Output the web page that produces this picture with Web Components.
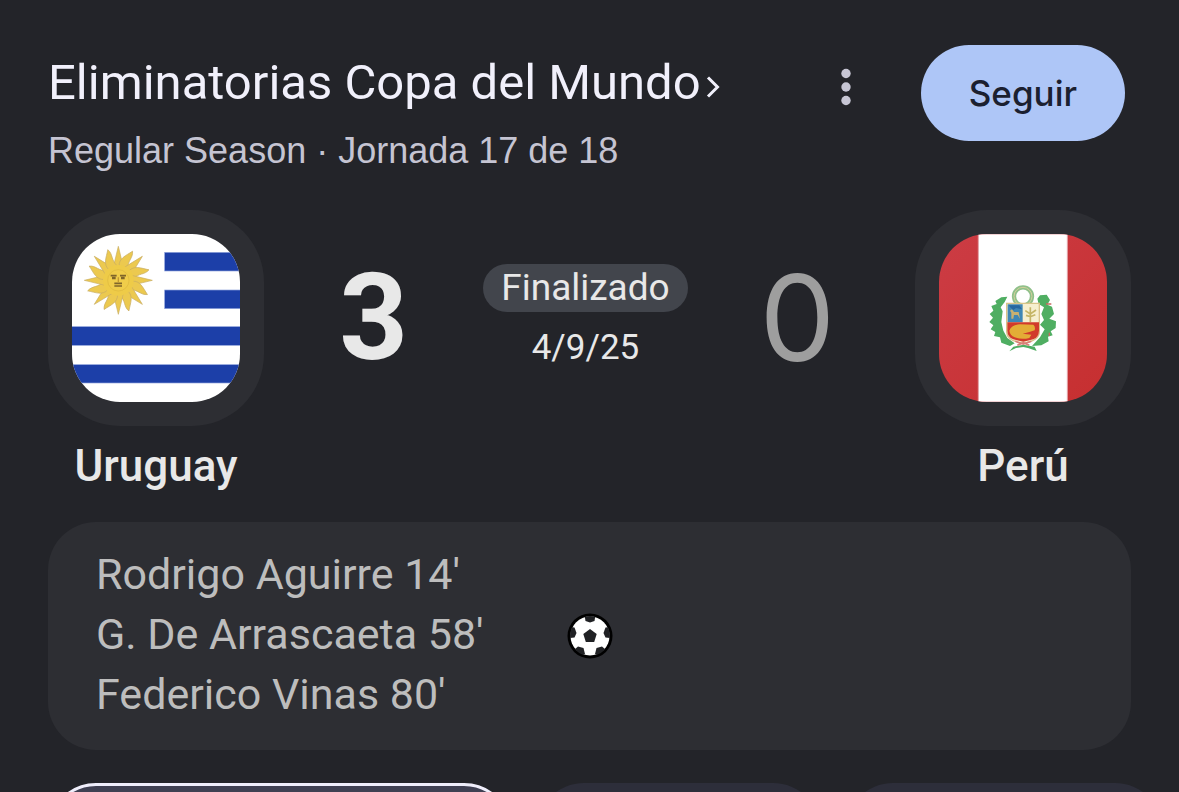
<!DOCTYPE html>
<html lang="es">
<head>
<meta charset="utf-8">
<meta name="viewport" content="width=device-width, initial-scale=1">
<title>Uruguay - Perú</title>
<style>
html{
    scrollbar-width: none;
}
body{
    margin: 0;
    background-color: #232429;
    color: #e8e8e8;
    font-family: Roboto, "Open Sans", sans-serif;
}
</style>
</head>
<body>

<match-panel>
    <match-header slot="header">
        <span slot="title">Eliminatorias Copa del Mundo</span>
        <span slot="subtitle">Regular Season · Jornada 17 de 18</span>
        <span slot="action">Seguir</span>
    </match-header>

    <match-score slot="score">
        <team-badge slot="home"><flag-uruguay slot="flag"></flag-uruguay>Uruguay</team-badge>
        <span slot="home-goals">3</span>
        <span slot="status">Finalizado</span>
        <span slot="date">4/9/25</span>
        <span slot="away-goals">0</span>
        <team-badge slot="away"><flag-peru slot="flag"></flag-peru>Perú</team-badge>
    </match-score>

    <goal-list slot="goals">
        <goal-item>Rodrigo Aguirre 14'</goal-item>
        <goal-item>G. De Arrascaeta 58'</goal-item>
        <goal-item>Federico Vinas 80'</goal-item>
    </goal-list>

    <match-tabs slot="tabs"></match-tabs>
</match-panel>

<script>
function define(name, html) {
    const template = document.createElement("template");
    template.innerHTML = html;
    window.customElements.define(name, class extends HTMLElement {
        constructor() {
            super();
            this.attachShadow({mode:"open"});
            this.shadowRoot.appendChild(template.content.cloneNode(true));
        }
    });
}

define("match-panel", `
<style>
:host{
    display: flex;
    flex-direction: column;
    height: 100vh;
    overflow: hidden;
}
</style>
<slot name="header"></slot>
<slot name="score"></slot>
<slot name="goals"></slot>
<slot name="tabs"></slot>
`);

define("match-header", `
<style>
:host{
    display: flex;
    align-items: flex-start;
    padding: 45px 54px 0 48px;
}
.titles{
    flex: 1;
    padding-top: 8px;
}
.title{
    display: flex;
    align-items: center;
    gap: 5px;
    color: #f1f0fb;
    font-size: 49px;
    line-height: 60px;
    text-decoration: none;
    white-space: nowrap;
}
.title svg{
    margin-top: 8px;
}
.subtitle{
    margin: 0;
    padding-top: 14px;
    color: #c5c4d2;
    font-family: "Liberation Sans", Arial, sans-serif;
    font-size: 36px;
    line-height: 48px;
    white-space: nowrap;
}
button{
    border: none;
    cursor: pointer;
    padding: 0;
}
.more{
    width: 48px;
    height: 86px;
    margin-right: 51px;
    background: none;
}
.follow{
    height: 96px;
    padding: 0 48px;
    border-radius: 48px;
    background-color: #aec6f7;
    color: #1b2030;
    font-family: Inter, sans-serif;
    font-size: 35px;
    font-weight: 500;
}
</style>
<div class="titles">
    <a class="title" href="#"><slot name="title"></slot><svg width="14" height="22" viewBox="0 0 14 22" fill="none" stroke="#f1f0fb" stroke-width="3"><path d="M2 1.500L11.500 11L2 20.500"/></svg></a>
    <p class="subtitle"><slot name="subtitle"></slot></p>
</div>
<button class="more"><svg width="12" height="38" viewBox="0 0 12 38" fill="#c7c6d4"><circle cx="6" cy="5.500" r="4.700"/><circle cx="6" cy="19" r="4.700"/><circle cx="6" cy="32.500" r="4.700"/></svg></button>
<button class="follow"><slot name="action"></slot></button>
`);

define("match-score", `
<style>
:host{
    display: grid;
    grid-template-columns: 216px 1fr 216px;
    padding: 35px 48px 0;
}
.middle{
    display: grid;
    grid-template-columns: 1fr auto 1fr;
    align-items: center;
    height: 216px;
    padding-right: 8px;
}
.goals{
    font-size: 120px;
    line-height: 144px;
    text-align: center;
}
.won{
    font-weight: 700;
}
.lost{
    color: #9e9e9e;
    font-family: Inter, sans-serif;
    font-weight: 400;
}
.info{
    display: flex;
    flex-direction: column;
    align-items: center;
    gap: 12px;
    font-size: 37px;
    line-height: 48px;
}
.status{
    padding: 0 18px;
    border-radius: 24px;
    background-color: #42454c;
}
.date{
    font-size: 35px;
}
</style>
<slot name="home"></slot>
<div class="middle">
    <div class="goals won"><slot name="home-goals"></slot></div>
    <div class="info">
        <div class="status"><slot name="status"></slot></div>
        <div class="date"><slot name="date"></slot></div>
    </div>
    <div class="goals lost"><slot name="away-goals"></slot></div>
</div>
<slot name="away"></slot>
`);

define("team-badge", `
<style>
:host{
    display: flex;
    flex-direction: column;
    align-items: center;
    gap: 12px;
    font-size: 44px;
    font-weight: 500;
    line-height: 56px;
}
.frame{
    padding: 24px;
    border-radius: 72px;
    background-color: #2d2e33;
}
</style>
<div class="frame"><slot name="flag"></slot></div>
<div><slot></slot></div>
`);

const flagStyle = `
<style>
:host{
    display: block;
    width: 168px;
    height: 168px;
    border-radius: 48px;
    overflow: hidden;
}
svg{
    display: block;
}
</style>
`;

/* sixteen rays, straight and wavy in turn */
let rays = "";
for (let i = 0; i < 16; i++) {
    const d = i % 2 ? "M-14 -40C-24 -62 -8 -76 6 -97C16 -78 2 -66 14 -40Z" : "M-15 -40L0 -102L15 -40Z";
    rays += `<path d="${d}" transform="translate(235 241) rotate(${i * 22.5})"/>`;
}

define("flag-uruguay", flagStyle + `
<svg width="168" height="168" viewBox="96 102 504 504">
    <rect x="96" y="102" width="504" height="504" fill="#fff"/>
    <g fill="#1c3fa8" stroke="#8fa3dc" stroke-width="2">
        <rect x="374" y="157" width="240" height="56"/>
        <rect x="374" y="270" width="240" height="56"/>
        <rect x="80" y="380" width="540" height="56"/>
        <rect x="80" y="494" width="540" height="55"/>
    </g>
    <g fill="#ecc94f" stroke="#c9ad62" stroke-width="2">${rays}</g>
    <circle cx="235" cy="241" r="46" fill="#eecb48"/>
    <circle cx="235" cy="241" r="32" fill="#f0cd4a" stroke="#dcb840" stroke-width="2"/>
    <g fill="none" stroke="#80662a">
        <path d="M212 227H230M240 227H258" stroke-width="5"/>
        <path d="M216 234H227M243 234H254" stroke-width="7"/>
        <path d="M235 232V246" stroke="#c39a31" stroke-width="4"/>
        <path d="M223 250H246M223 258H246" stroke-width="5"/>
    </g>
</svg>
`);

define("flag-peru", flagStyle + `
<svg width="168" height="168" viewBox="117 102 504 504">
    <defs>
        <linearGradient id="red" x1="0" y1="0" x2="1" y2="1">
            <stop offset="0" stop-color="#cc3c44"/>
            <stop offset="1" stop-color="#c62f30"/>
        </linearGradient>
    </defs>
    <rect x="117" y="102" width="504" height="504" fill="url(#red)"/>
    <rect x="235" y="102" width="267" height="504" fill="#fff" stroke="#e3a3a8" stroke-width="3"/>
    <g fill="#4fae62">
        <path d="M322 290L304 292L286 303L290 312L274 318L280 332L269 342L279 353L268 366L280 376L272 388L286 396L282 408L300 412L304 428L330 438L344 430L322 414L310 392L304 366L308 334L302 322L314 306Z"/>
        <path d="M420 286L440 284L450 300L442 314L456 320L462 342L448 356L468 364L467 384L452 394L458 406L444 410L446 424L424 436L396 438L420 412L434 388L420 374L432 360L424 342L432 322L416 312L412 296Z"/>
        <path d="M328 454L340 440L370 434L404 440L410 453L384 444L370 441L348 444Z"/>
    </g>
    <circle cx="369" cy="289" r="27" fill="none" stroke="#8fc08a" stroke-width="13"/>
    <circle cx="369" cy="289" r="27" fill="none" stroke="#d3cf9a" stroke-width="3"/>
    <path d="M320 310H418V396Q418 422 369 430Q320 422 320 396Z" fill="#f6efcf" stroke="#d8c489" stroke-width="4"/>
    <path d="M323 313H368V367H323Z" fill="#3f86b5"/>
    <path d="M334 356V338L330 332L336 328L342 336H356L360 356L353 345H342L340 356Z" fill="#c9b071"/>
    <path d="M326 316H358L366 328L348 324L340 330L332 323Z" fill="#2667a0"/>
    <path d="M391 366V340M376 332L391 342L408 330M378 346L391 350L406 344M391 340V322" fill="none" stroke="#c5b566" stroke-width="5"/>
    <path d="M322 367H417V392Q417 410 400 418L370 425L340 418Q322 410 322 392Z" fill="#d13a2b"/>
    <path d="M328 392Q334 374 360 373L400 374Q407 380 404 391L388 396L368 401L394 404L388 414Q364 420 344 412Q330 406 328 392Z" fill="#e3ad36"/>
    <path d="M346 424L370 432L394 424M352 436L370 428L388 436" fill="none" stroke="#d88078" stroke-width="5"/>
    <path d="M438 312H454M448 398V408" stroke="#c76a60" stroke-width="4"/>
</svg>
`);

define("goal-list", `
<style>
:host{
    display: grid;
    grid-template-columns: 1fr auto 1fr;
    align-items: center;
    margin: 28px 48px 0;
    padding: 22px 48px 26px;
    border-radius: 48px;
    background-color: #2d2e33;
    color: #bdbdbd;
    font-size: 43px;
    line-height: 60px;
}
svg{
    display: block;
    margin-top: 4px;
}
</style>
<div role="list"><slot></slot></div>
<svg width="46" height="46" viewBox="0 0 46 46">
    <defs><clipPath id="ball"><circle cx="23" cy="23" r="20"/></clipPath></defs>
    <circle cx="23" cy="23" r="22.500" fill="#000"/>
    <circle cx="23" cy="23" r="19.500" fill="#fff"/>
    <g fill="#202124" clip-path="url(#ball)">
        <path d="M23 16L29.700 21L27.200 29H18.800L16.300 21Z"/>
        <path d="M17.500 2H28.500L27.500 8L23 9.500L18.500 8Z"/>
        <path d="M44 14V25L38.500 24.500L36.500 20L38.500 14.500Z"/>
        <path d="M2 14V25L7.500 24.500L9.500 20L7.500 14.500Z"/>
        <path d="M28 41L29.500 35L35 33.500L38.500 36.500L33 43Z"/>
        <path d="M18 41L16.500 35L11 33.500L7.500 36.500L13 43Z"/>
    </g>
</svg>
`);

define("goal-item", `
<style>
:host{
    display: block;
    white-space: nowrap;
}
</style>
<div role="listitem"><slot></slot></div>
`);

define("match-tabs", `
<style>
:host{
    display: flex;
    gap: 24px;
    padding: 33px 16px 48px 48px;
}
button{
    flex: 284;
    height: 96px;
    border: none;
    border-radius: 48px;
    background-color: #2d2e3a;
}
.selected{
    flex: 464;
    border: 3px solid #efeefb;
    background-color: #3f4052;
}
.wide{
    flex: 318;
}
</style>
<button class="selected"></button>
<button></button>
<button class="wide"></button>
`);
</script>
</body>
</html>
